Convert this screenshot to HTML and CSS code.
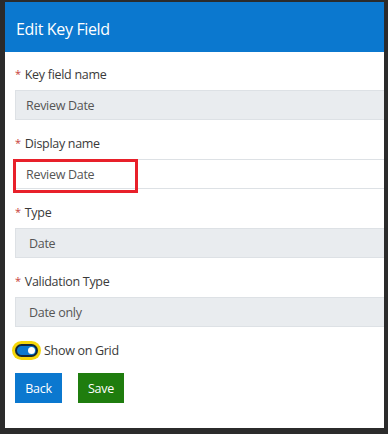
FILE: index.html
```html
<!DOCTYPE html>
<html lang="en">
<head>
    <meta charset="UTF-8">
    <meta name="viewport" content="width=device-width, initial-scale=1.0">
    <title>Edit Key Field</title>
    <link rel="stylesheet" href="styles.css">
</head>
<body>
    <div class="dialog">
        <div class="dialog-header">
            <h2>Edit Key Field</h2>
        </div>

        <div class="dialog-body">
            <div class="field-group">
                <label for="keyName"><span class="req">*</span>Key field name</label>
                <input type="text" id="keyName" class="field readonly" value="Review Date" readonly>
            </div>

            <div class="field-group highlighted">
                <label for="displayName"><span class="req">*</span>Display name</label>
                <div class="field-wrap">
                    <input type="text" id="displayName" class="field" value="Review Date">
                    <span class="marker"></span>
                </div>
            </div>

            <div class="field-group">
                <label for="fieldType"><span class="req">*</span>Type</label>
                <select id="fieldType" class="field readonly select" disabled>
                    <option>Date</option>
                </select>
            </div>

            <div class="field-group">
                <label for="validation"><span class="req">*</span>Validation Type</label>
                <select id="validation" class="field readonly select" disabled>
                    <option>Date only</option>
                </select>
            </div>

            <div class="toggle-row">
                <span class="switch"><span class="knob"></span></span>
                <span class="toggle-label">Show on Grid</span>
            </div>

            <div class="actions">
                <button class="btn btn-back">Back</button>
                <button class="btn btn-save">Save</button>
            </div>
        </div>
    </div>
</body>
</html>
```

FILE: styles.css
```css
body {
    margin: 0;
    background: #2b2b2b;
    font-family: "Open Sans", "Noto Sans", sans-serif;
    letter-spacing: -0.3px;
    height: 434px;
    overflow: hidden;
}

.dialog {
    margin: 2px 4px 0 5px;
    height: 426px;
    background: #fff;
    overflow: hidden;
}

.dialog-header {
    background: #0b78cf;
    color: white;
    height: 50px;
    padding: 0 11px;
    display: flex;
    align-items: center;
}

.dialog-header h2 {
    margin: 4px 0 0 0;
    font-size: 16px;
    font-weight: 400;
    letter-spacing: -0.35px;
}

.dialog-body {
    padding: 13px 0 0 10px;
}

.field-group {
    margin-bottom: 14px;
}

.field-group label {
    display: block;
    height: 20px;
    font-size: 12.5px;
    line-height: 20px;
    color: #3a3a3a;
    margin-bottom: 5px;
}

.req {
    color: #c7403a;
    font-size: 11px;
    line-height: 0;
    margin-right: 4px;
    vertical-align: 1px;
}

.field-wrap {
    position: relative;
}

.field {
    display: block;
    width: calc(100% + 10px);
    height: 30px;
    box-sizing: border-box;
    border: 1px solid #dde1e5;
    background: white;
    padding: 0 10px;
    font-family: inherit;
    font-size: 12.5px;
    letter-spacing: -0.3px;
    color: #555;
    outline: none;
}

.field.readonly {
    background: #e9ecef;
}

.field.select {
    -webkit-appearance: none;
    appearance: none;
    padding: 0 13px;
    opacity: 1;
}

.marker {
    position: absolute;
    left: -2px;
    top: 0;
    width: 125px;
    height: 34px;
    box-sizing: border-box;
    border: 3px solid #e8202a;
}

.toggle-row {
    display: flex;
    align-items: center;
    height: 18px;
    gap: 6px;
}

.switch {
    position: relative;
    width: 23px;
    height: 13px;
    box-sizing: border-box;
    border: 2px solid #13263a;
    border-radius: 7px;
    background: #0b78cf;
    box-shadow: 0 0 0 3px #f5d60a;
}

.knob {
    position: absolute;
    right: 1px;
    top: 1px;
    width: 7px;
    height: 7px;
    border-radius: 50%;
    background: white;
}

.toggle-label {
    font-size: 12.5px;
    color: #3a3a3a;
}

.actions {
    display: flex;
    gap: 16px;
    margin-top: 14px;
}

.btn {
    height: 30px;
    padding: 0 9px;
    border: none;
    color: white;
    font-family: inherit;
    font-size: 12.5px;
    letter-spacing: -0.3px;
    cursor: pointer;
}

.btn-back {
    background: #0b78cf;
    width: 47px;
}

.btn-save {
    background: #1f7d0e;
    width: 46px;
}
```
